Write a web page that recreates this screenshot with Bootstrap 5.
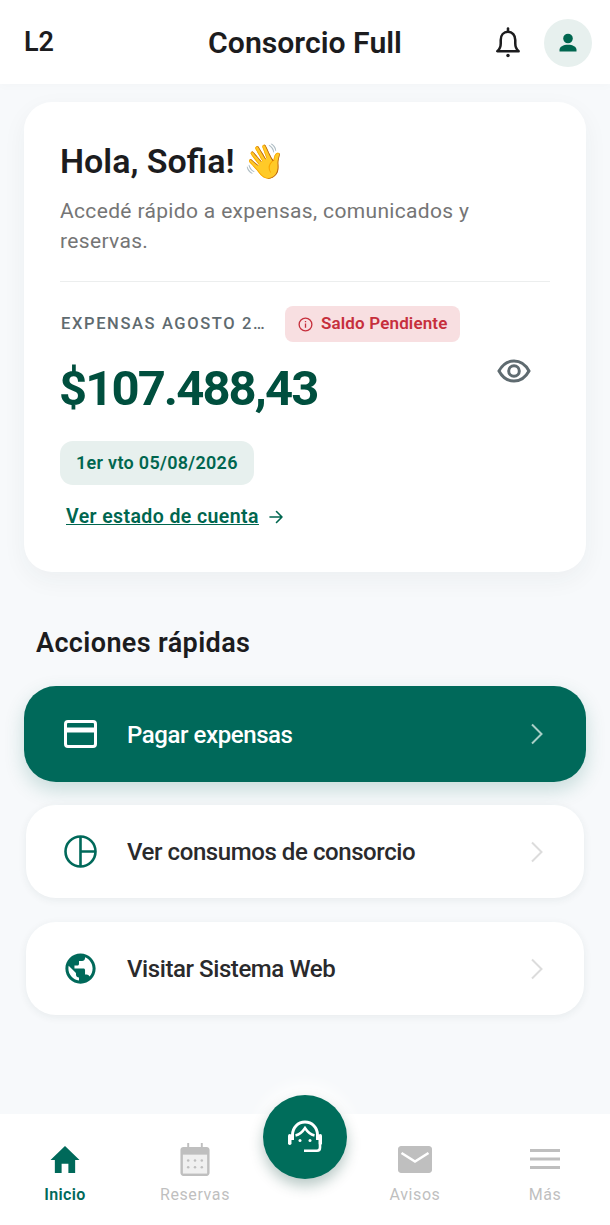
<!DOCTYPE html>
<html lang="es">
<head>
<meta charset="utf-8">
<title>Consorcio Full</title>
<link href="https://cdn.jsdelivr.net/npm/bootstrap@5.3.0/dist/css/bootstrap.min.css" rel="stylesheet">
<style>
html,body{height:100%;}
body{font-family:Roboto,"Liberation Sans",sans-serif;background:#f7f9fb;color:#1c1c1e;}
.app-shell{height:1225px;width:610px;overflow:hidden;}
.top-bar{height:84px;padding:0 18px 0 24px;background:#fff;box-shadow:0 2px 10px rgba(30,50,60,.02);}
.level-tag{font-size:27px;font-weight:600;line-height:1;width:144px;margin-top:1px;letter-spacing:-.2px;}
.app-title{font-size:30.200px;font-weight:600;line-height:1;margin-top:3px;}
.top-actions{width:150px;gap:23px;margin-top:1px;}
.avatar-dot{width:48px;height:48px;border-radius:50%;background:#e7f0ee;}
.content-area{padding:18px 24px 0;}
.hello-card{height:470px;border-radius:28px;padding:38px 36px 0;box-shadow:0 8px 24px rgba(30,50,60,.05);border:0;background:#fff;}
.hello-title{font-size:34px;font-weight:600;line-height:42px;margin:0;}
.hello-sub{font-size:21px;line-height:30px;color:#757575;margin:14px 0 0;width:450px;letter-spacing:.34px;}
.hello-rule{height:1px;background:#eceeee;margin:25px 0 0;}
.exp-label{font-size:16.500px;font-weight:500;letter-spacing:1.620px;color:#5f6b70;width:205px;white-space:nowrap;margin-left:1px;}
.exp-row{margin-top:24px;height:36px;gap:19px;}
.debt-pill{height:36px;padding:0 12px 0 13px;border-radius:8px;background:#f8dfe1;color:#c62f3c;font-size:17px;font-weight:600;gap:8px;letter-spacing:.15px;}
.amount-row{margin-top:21px;height:52px;}
.amount-value{font-size:49px;font-weight:700;line-height:52px;color:#004f3e;letter-spacing:-1.900px;margin-left:-1px;}
.eye-btn{margin:-5px 19px 0 0;}
.due-pill{display:inline-block;margin-top:26px;height:44px;line-height:44px;padding:0 16px;border-radius:13px;background:#e7f0ee;color:#00664f;font-size:18px;font-weight:600;letter-spacing:.3px;}
.state-link{margin:20px 0 0 6px;gap:9px;color:#00664f;font-size:19.500px;font-weight:600;text-decoration:underline;letter-spacing:.4px;line-height:24px;}
.state-link span{text-decoration:underline;}
.section-head{font-size:27px;font-weight:600;line-height:32px;margin:55px 0 27px 12px;letter-spacing:.38px;}
.action-main,.action-plain{display:flex;align-items:center;text-decoration:none;}
.action-main{height:96px;margin:0 0 23px;border-radius:32px;background:#00695a;color:#fff;box-shadow:0 8px 20px rgba(0,105,90,.2);padding:0 42px 0 40px;}
.action-main .action-text{padding-top:2px;}
.action-plain{height:93px;margin:0 2px 24px;border-radius:30px;background:#fff;color:#2a2a2c;box-shadow:0 2px 8px rgba(30,50,60,.07);padding:0 40px 0 38px;}
.action-text{font-size:24px;font-weight:500;letter-spacing:-.42px;margin-left:30px;flex:1;}
.nav-dock{height:111px;background:#fff;}
.dock-item{flex:none;text-decoration:none;color:#bfbfbf;font-size:16px;font-weight:400;letter-spacing:.6px;line-height:20px;padding-top:27px;gap:8px;width:130px;}
.dock-item.active-tab{color:#00695a;font-weight:600;letter-spacing:.4px;}
.dock-icon{height:36px;display:flex;align-items:center;justify-content:center;}
.dock-gap{flex:none;width:90px;}
.help-fab{position:absolute;left:263px;top:-19px;width:84px;height:84px;border-radius:50%;background:#006d5b;box-shadow:0 7px 14px rgba(0,60,50,.28),0 -6px 16px 6px rgba(255,255,255,.8);}
</style>
</head>
<body>
<div class="app-shell d-flex flex-column">
  <header class="top-bar d-flex align-items-center justify-content-between">
    <div class="level-tag">L2</div>
    <div class="app-title">Consorcio Full</div>
    <div class="top-actions d-flex align-items-center justify-content-end">
      <svg width="26" height="31" viewBox="0 0 26 32" fill="none" stroke="#1c1c1e" stroke-width="2.600" stroke-linejoin="round"><path d="M2 25h22c-2.300-2-3.500-4.500-3.500-8v-3.500C20.500 8.500 17.500 5 13 5S5.500 8.500 5.500 13.500V17C5.500 20.500 4.300 23 2 25Z"/><path d="M13 1.500V5" stroke-linecap="round"/><circle cx="13" cy="29.500" r="1.800" fill="#1c1c1e" stroke="none"/></svg>
      <div class="avatar-dot d-flex align-items-center justify-content-center">
        <svg width="20" height="20" viewBox="0 0 20 20" fill="#00664f"><circle cx="10" cy="5.500" r="4.800"/><path d="M1.500 18.500v-1.800c0-3 3.800-5 8.500-5s8.500 2 8.500 5v1.800Z"/></svg>
      </div>
    </div>
  </header>

  <main class="content-area flex-grow-1">
    <section class="card hello-card">
      <h1 class="hello-title">Hola, Sofia! 👋</h1>
      <p class="hello-sub">Accedé rápido a expensas, comunicados y reservas.</p>
      <div class="hello-rule"></div>
      <div class="exp-row d-flex align-items-center">
        <span class="exp-label">EXPENSAS AGOSTO 2…</span>
        <span class="debt-pill d-inline-flex align-items-center">
          <svg width="15" height="15" viewBox="0 0 16 16" fill="none" stroke="#c62f3c" stroke-width="1.400"><circle cx="8" cy="8" r="6.800"/><path d="M8 7v4.500M8 4.200v1.400"/></svg>
          Saldo Pendiente
        </span>
      </div>
      <div class="amount-row d-flex justify-content-between align-items-start">
        <div class="amount-value">$107.488,43</div>
        <svg class="eye-btn" width="34" height="26" viewBox="0 0 34 26" fill="none" stroke="#5f6b70" stroke-width="3"><path d="M2 13C5.500 6.500 10.500 3 17 3s11.500 3.500 15 10c-3.500 6.500-8.500 10-15 10S5.500 19.500 2 13Z"/><circle cx="17" cy="13" r="5.300"/></svg>
      </div>
      <div><span class="due-pill">1er vto 05/08/2026</span></div>
      <a href="#" class="state-link d-inline-flex align-items-center align-self-start">
        <span>Ver estado de cuenta</span>
        <svg width="16" height="16" viewBox="0 0 16 16" fill="none" stroke="#00664f" stroke-width="1.600" stroke-linecap="round" stroke-linejoin="round"><path d="M2 8h12M8.500 2.500 14 8l-5.500 5.500"/></svg>
      </a>
    </section>

    <h2 class="section-head">Acciones rápidas</h2>

    <a href="#" class="action-main">
      <svg width="33" height="28" viewBox="0 0 33 28" fill="none" stroke="#fff" stroke-width="3"><rect x="1.500" y="1.500" width="30" height="25" rx="2.500"/><path d="M1.500 10h30" stroke-width="5"/></svg>
      <span class="action-text">Pagar expensas</span>
      <svg width="14" height="22" viewBox="0 0 14 22" fill="none" stroke="#a9cfc7" stroke-width="2"><path d="M2 1.500 11.500 11 2 20.500"/></svg>
    </a>
    <a href="#" class="action-plain">
      <svg width="33" height="33" viewBox="0 0 33 33" fill="none" stroke="#00695a" stroke-width="2.600"><circle cx="16.500" cy="16.500" r="15"/><path d="M16.500 1.500v30M16.500 16.500h15"/></svg>
      <span class="action-text">Ver consumos de consorcio</span>
      <svg width="14" height="22" viewBox="0 0 14 22" fill="none" stroke="#dcdcdc" stroke-width="2"><path d="M2 1.500 11.500 11 2 20.500"/></svg>
    </a>
    <a href="#" class="action-plain">
      <svg width="33" height="33" viewBox="0 0 24 24" fill="#00695a"><path d="M12 1C5.900 1 1 5.900 1 12s4.900 11 11 11 11-4.900 11-11S18.100 1 12 1Zm-1.100 19.700C6.600 20.200 3.200 16.500 3.200 12c0-.7.100-1.300.2-2l5.300 5.300v1.100c0 1.200 1 2.200 2.200 2.200v2.100Zm7.600-2.800c-.3-.9-1.100-1.500-2.100-1.500h-1.100v-3.300c0-.6-.5-1.100-1.100-1.100H7.600V9.800h2.200c.6 0 1.100-.5 1.100-1.100V6.500h2.200c1.200 0 2.200-1 2.200-2.200v-.5c3.200 1.300 5.500 4.500 5.500 8.200 0 2.300-.9 4.400-2.300 5.900Z"/></svg>
      <span class="action-text">Visitar Sistema Web</span>
      <svg width="14" height="22" viewBox="0 0 14 22" fill="none" stroke="#dcdcdc" stroke-width="2"><path d="M2 1.500 11.500 11 2 20.500"/></svg>
    </a>
  </main>

  <nav class="nav-dock position-relative d-flex">
    <a href="#" class="dock-item active-tab d-flex flex-column align-items-center">
      <span class="dock-icon"><svg width="32" height="29" viewBox="0 0 32 30" fill="#00695a"><path d="M16 1 1 15.500h4.500V29h7V19.500h7V29h7V15.500H31Z"/></svg></span>
      Inicio
    </a>
    <a href="#" class="dock-item d-flex flex-column align-items-center">
      <span class="dock-icon"><svg width="30" height="33" viewBox="0 0 30 34" fill="#bfbfbf"><path d="M7 0h2v4h12V0h2v4h4c1.600 0 3 1.400 3 3v24c0 1.600-1.400 3-3 3H3c-1.600 0-3-1.400-3-3V7c0-1.600 1.400-3 3-3h4Z"/><rect x="2.500" y="12" width="25" height="19.500" fill="#f0f0f0"/><g fill="#bfbfbf"><circle cx="8" cy="18" r="1.300"/><circle cx="15" cy="18" r="1.300"/><circle cx="22" cy="18" r="1.300"/><circle cx="8" cy="25" r="1.300"/><circle cx="15" cy="25" r="1.300"/><circle cx="22" cy="25" r="1.300"/></g></svg></span>
      Reservas
    </a>
    <div class="dock-gap"></div>
    <a href="#" class="dock-item d-flex flex-column align-items-center">
      <span class="dock-icon"><svg width="34" height="27" viewBox="0 0 34 27" fill="#bfbfbf"><path d="M3 0h28c1.600 0 3 1.400 3 3v21c0 1.600-1.400 3-3 3H3c-1.600 0-3-1.400-3-3V3C0 1.400 1.400 0 3 0Z"/><path d="M3.500 7 17 15.500 30.500 7" fill="none" stroke="#fff" stroke-width="2.600"/></svg></span>
      Avisos
    </a>
    <a href="#" class="dock-item d-flex flex-column align-items-center">
      <span class="dock-icon"><svg width="30" height="20" viewBox="0 0 30 20" fill="#bfbfbf"><rect y="0" width="30" height="3"/><rect y="8.500" width="30" height="3"/><rect y="17" width="30" height="3"/></svg></span>
      Más
    </a>
    <a href="#" class="help-fab d-flex align-items-center justify-content-center" aria-label="Ayuda">
      <svg width="36" height="34" viewBox="0 0 36 34" fill="none" stroke="#fff"><path d="M5.500 20V15C5.500 7.500 11 2 18 2s12.500 5.500 12.500 13v5" stroke-width="3"/><path d="M8.500 15.500C12.500 14.500 15.500 12 18 8c2.500 4 5.500 6.500 9.500 7.500" stroke-width="2.400"/><rect x="1" y="14" width="3.500" height="11" rx="1.700" fill="#fff" stroke="none"/><rect x="31.500" y="14" width="3.500" height="11" rx="1.700" fill="#fff" stroke="none"/><path d="M33 24v3.500c0 2-1 3.200-3 3.200H17" stroke-width="2.600"/><circle cx="13" cy="20.500" r="1.500" fill="#fff" stroke="none"/><circle cx="23" cy="20.500" r="1.500" fill="#fff" stroke="none"/></svg>
    </a>
  </nav>
</div>
<script src="https://cdn.jsdelivr.net/npm/bootstrap@5.3.0/dist/js/bootstrap.bundle.min.js"></script>
</body>
</html>
